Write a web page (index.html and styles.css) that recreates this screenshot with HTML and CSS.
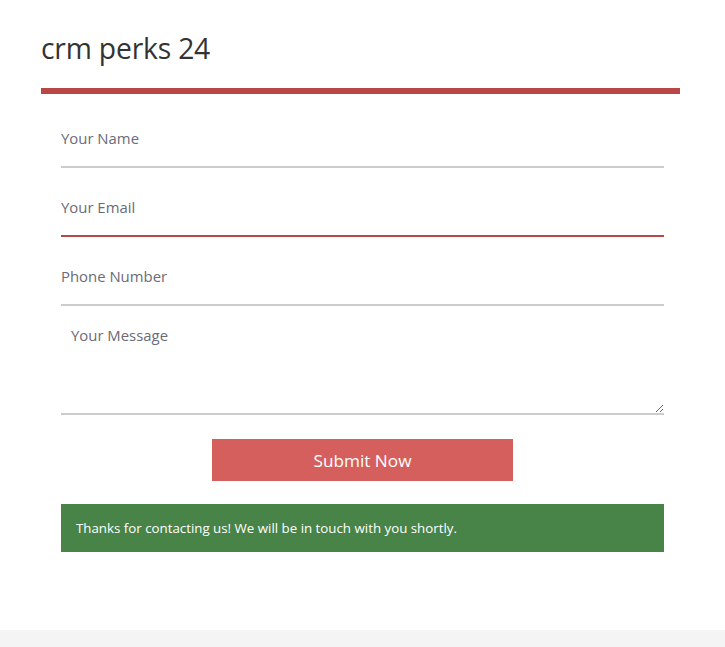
FILE: index.html
```html
<!DOCTYPE html>
<html>
<head>
<meta charset="utf-8">
<link rel="stylesheet" href="styles.css">
</head>
<body>
<div class="page">
  <h1 class="title">crm perks 24</h1>
  <div class="bar"></div>
  <form class="form">
    <input class="field" type="text" placeholder="Your Name">
    <input class="field field-error" type="email" placeholder="Your Email">
    <input class="field" type="text" placeholder="Phone Number">
    <textarea class="field message" placeholder="Your Message"></textarea>
    <div class="actions">
      <button class="submit" type="button">Submit Now</button>
    </div>
    <div class="notice">Thanks for contacting us! We will be in touch with you shortly.</div>
  </form>
</div>
<div class="footer"></div>
</body>
</html>
```

FILE: styles.css
```css
html, body {
  margin: 0;
  padding: 0;
  background: #fff;
}
body {
  font-family: "Open Sans", "Noto Sans", sans-serif;
}
.page {
  width: 680px;
  padding: 26px 0 0 41px;
  height: 604px;
  box-sizing: border-box;
}
.title {
  margin: 0;
  font-weight: 400;
  font-size: 28.3px;
  line-height: 44px;
  color: #333;
  letter-spacing: -0.2px;
}
.bar {
  margin-top: 18px;
  height: 6px;
  background: #b94745;
}
.form {
  padding: 20px 16px 0 20px;
  display: flex;
  flex-direction: column;
}
.field {
  display: block;
  box-sizing: border-box;
  width: 100%;
  height: 54px;
  border: none;
  border-bottom: 2px solid #cccccc;
  padding: 0 0 4px 0;
  margin: 0 0 15px 0;
  font-family: inherit;
  font-size: 14.9px;
  color: #333;
  background: transparent;
  outline: none;
}
.field::placeholder {
  color: #6b6b78;
}
.field-error {
  border-bottom-color: #b94745;
}
.message {
  height: 94px;
  padding: 4px 10px;
  resize: vertical;
  margin-bottom: 24px;
  line-height: 20px;
}
.actions {
  display: flex;
  justify-content: center;
}
.submit {
  width: 301px;
  height: 42px;
  border: none;
  background: #d55f5d;
  color: #fff;
  font-family: inherit;
  font-size: 17.2px;
  cursor: pointer;
  padding: 0;
}
.notice {
  margin-top: 23px;
  height: 48px;
  box-sizing: border-box;
  padding: 0 15px;
  display: flex;
  align-items: center;
  background: #488447;
  color: #fff;
  font-size: 13.3px;
}
.footer {
  height: 17px;
  margin-top: 26px;
  background: #f4f4f4;
}
```
